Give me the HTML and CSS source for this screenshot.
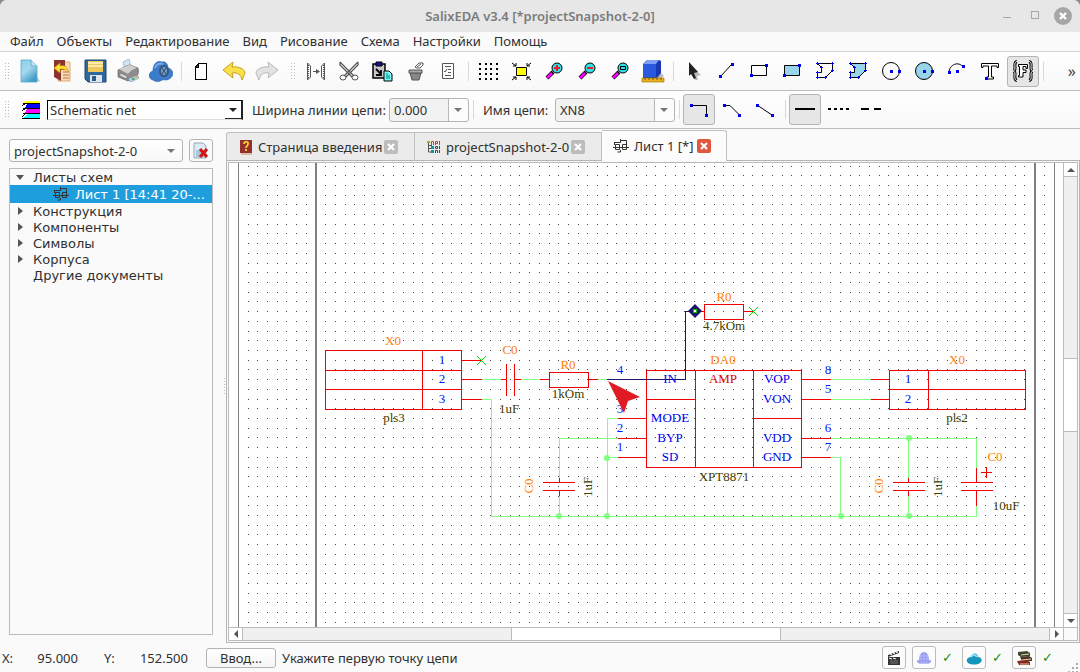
FILE: index.html
```html
<!DOCTYPE html>
<html lang="ru">
<head>
<meta charset="utf-8">
<title>SalixEDA v3.4</title>
<link rel="stylesheet" href="styles.css">
</head>
<body>
<div class="window">
<header class="titlebar">
  <span class="titlebar-side"></span>
  <h1 class="title">SalixEDA v3.4 [*projectSnapshot-2-0]</h1>
  <span class="titlebar-side window-buttons">
    <button class="window-button" aria-label="Свернуть"><svg width="18" height="18"><path d="M5 10h8v1H5z" fill="#a8a8a8"/></svg></button>
    <button class="window-button" aria-label="Развернуть"><svg width="18" height="18" class="crisp"><rect x="5.500" y="4.500" width="7" height="7" fill="none" stroke="#a8a8a8"/></svg></button>
    <button class="window-button" aria-label="Закрыть"><svg width="18" height="18"><circle cx="9" cy="9" r="9" fill="#a6a6a6"/><path d="M6 6l6 6M12 6l-6 6" stroke="#fff" stroke-width="2.400"/></svg></button>
  </span>
</header>

<nav class="menubar">
  <button>Файл</button><button>Объекты</button><button>Редактирование</button><button>Вид</button><button>Рисование</button><button>Схема</button><button>Настройки</button><button>Помощь</button>
</nav>

<div class="toolbar">
  <span class="grip grip-start"></span>
  <button class="tool" aria-label="Новый"><svg class="icon" viewBox="0 0 24 24"><defs><linearGradient id="sky" x2="0.600" y2="1"><stop stop-color="#86d0ea"/><stop offset="0.500" stop-color="#a6d9ec"/><stop offset="1" stop-color="#3f9cc6"/></linearGradient></defs><path d="M18 15l5 7-3 1h-5z" fill="#ccc"/><path d="M4 1h10l6 6v16H4z" fill="url(#sky)" stroke="#55a9cd" stroke-width="0.800"/><path d="M14 1v6h6" fill="#bfe5f2" stroke="#55a9cd" stroke-width="0.800"/></svg></button>
  <button class="tool" aria-label="Открыть"><svg class="icon" viewBox="0 0 24 24"><path d="M8 3h12v19H8z" fill="#f6dcb8" stroke="#e0ac70"/><path d="M13 13h6M13 16h6M13 19h6" stroke="#b8763e"/><path d="M4 1h11v10h-4v11l-7-4z" fill="#8c3330"/><path d="M4 9l6-5v3c5-1 8 1 8 6-2-3-5-3-8-3v4z" fill="#ffe22e" stroke="#c79a10" stroke-width="0.700"/></svg></button>
  <button class="tool" aria-label="Сохранить"><svg class="icon" viewBox="0 0 24 24"><path d="M2 1h21v22H5l-3-3z" fill="#2f679b" stroke="#1d4671"/><path d="M5 2h15v11H5z" fill="#f2c759"/><path d="M5 4h15M5 7h15" stroke="#fbe9ad" stroke-width="2"/><path d="M7 16h12v7H7z" fill="#dde6ee"/><path d="M9 17h4v5H9z" fill="#2b5a8b"/></svg></button>
  <button class="tool" aria-label="Печать"><svg class="icon" viewBox="0 0 24 24"><path d="M7 3l6-3 2 8-6 3z" fill="#d3e4f2" stroke="#8eb0cc" stroke-width="0.800"/><path d="M2 11c3-1 8-5 12-5l8 3c1 4 0 8-2 9l-8 4-10-4z" fill="#8c8c8c" stroke="#666" stroke-width="0.700"/><path d="M3 10c3-1 8-4 11-4l7 3c-4 1-7 3-9 6z" fill="#cfcfcf"/><path d="M4 14l7 3v3l-7-3z" fill="#ddd" stroke="#666" stroke-width="0.600"/><path d="M12 20l9-4 2 3-8 4z" fill="#bcd8ef" stroke="#678" stroke-width="0.500"/><path d="M15 20l3-1 1 1-2 1z" fill="#2c9a3b"/><path d="M18 18l3-1 1 1-2 1z" fill="#e8a228"/></svg></button>
  <button class="tool" aria-label="Облако"><svg class="icon" viewBox="0 0 24 24"><path d="M4 21c-5-1-5-8 0-9 0-7 4-11 9-9 4-1 6 3 6 6 6 1 6 9 1 11-3 2-4 0-7 1-3 2-6 2-9 0z" fill="#3b7dcc" stroke="#2a62ab" stroke-width="0.700"/><path d="M6 9c1-4 5-5 8-4" stroke="#7aacE6" stroke-width="2" fill="none"/><ellipse cx="15" cy="12" rx="4" ry="5" fill="#6f9fd2" stroke="#3a5578" stroke-width="2"/><path d="M13 9l4 6M17 9l-4 6" stroke="#2f4867"/></svg></button>
  <span class="divider"></span>
  <button class="tool" aria-label="Лист"><svg class="icon crisp" viewBox="0 0 24 24"><path d="M6.500 7.500l3-3h8v16h-11z" fill="#fff" stroke="#000"/><path d="M6.500 8.500h3v-4z" fill="#1a8f86" stroke="#000"/></svg></button>
  <button class="tool" aria-label="Отменить"><svg class="icon" viewBox="0 0 24 24"><path d="M1 11l10-8-1 5c8-1 13 3 13 6l-3 7c-1-5-4-8-10-7l1 5z" fill="#fbe04a" stroke="#c4a013" stroke-linejoin="round"/></svg></button>
  <button class="tool" aria-label="Повторить"><svg class="icon" viewBox="0 0 24 24"><path d="M23 11L13 3l1 5C6 7 1 11 1 14l3 7c1-5 4-8 10-7l-1 5z" fill="#e2e2e2" stroke="#b8b8b8" stroke-linejoin="round"/></svg></button>
  <span class="grip grip-middle"></span>
  <button class="tool" aria-label="Разделить"><svg class="icon line-icon" viewBox="0 0 24 24"><path d="M3.500 4v17M3.500 4l3 3v11l-3 3M20.500 4v17M20.500 4l-3 3v11l3 3M9 12.500h5"/><path d="M4.500 6v13M19.500 6v13" stroke-dasharray="1 1"/><path d="M12 10l4 2.500-4 2.500z" fill="#555" stroke="none"/></svg></button>
  <button class="tool" aria-label="Вырезать"><svg class="icon" viewBox="0 0 24 24" fill="none" stroke="#555"><path d="M3 3l14 14M21 3L7 17M3 3v3l12 12M21 3v3L9 18" stroke-width="1.200"/><ellipse cx="6" cy="18.500" rx="3" ry="2.500"/><ellipse cx="18" cy="18.500" rx="3" ry="2.500"/></svg></button>
  <button class="tool" aria-label="Вставить"><svg class="icon" viewBox="0 0 24 24"><path d="M3 5h12v14H3z" fill="#c6c6c6" stroke="#000" stroke-width="1.500"/><path d="M6 3h6v4H6z" fill="#16159b" stroke="#000"/><path d="M6 10l5 5M11 11v5H6" stroke="#000" stroke-width="1.800" fill="none"/><path d="M14 12h5l3 3v7h-8z" fill="#7ff" stroke="#000"/><path d="M16 15h2M16 17h4M16 19h4" stroke="#077"/></svg></button>
  <button class="tool" aria-label="Удалить"><svg class="icon" viewBox="0 0 24 24"><path d="M7 14h11l-2 7H9z" fill="#888" stroke="#555"/><path d="M6 11h13v3H6z" fill="#aaa" stroke="#555"/><path d="M12 8l4-4h4v2l-3 3h-3z" fill="#fff" stroke="#555"/><path d="M14 8l4-3" stroke="#555"/></svg></button>
  <button class="tool" aria-label="Свойства"><svg class="icon line-icon" viewBox="0 0 24 24"><path d="M6.500 4.500h11v15h-11zM9 7.500h6M12 10.500h3M12 13.500h3M9 16.500h6M8 12l1 1 2-3"/></svg></button>
  <span class="divider"></span>
  <button class="tool" aria-label="Сетка"><svg class="icon crisp" viewBox="0 0 24 24"><path d="M4 4v17M10 4v17M15 4v17M21 4v17" stroke="#000" stroke-width="2" stroke-dasharray="2 3"/></svg></button>
  <button class="tool" aria-label="Показать всё"><svg class="icon" viewBox="0 0 24 24"><path d="M7.500 8.500h10v8h-10z" fill="#ff0" stroke="#000"/><path d="M3 4l4 3M7 4v3H4M22 4l-4 3M18 4v3h3M3 21l4-3M7 21v-3H4M22 21l-4-3M18 21v-3h3" stroke="#000" fill="none"/></svg></button>
  <button class="tool" aria-label="Увеличить"><svg class="icon" viewBox="0 0 24 24"><path d="M5 19l6-6" stroke="#000" stroke-width="4"/><path d="M5 19l5-5" stroke="#f0f" stroke-width="2.500"/><circle cx="15" cy="9" r="5" fill="#31e1e6" stroke="#000"/><path d="M12 9h6M15 6v6" stroke="#e3202a" stroke-width="2"/></svg></button>
  <button class="tool" aria-label="Уменьшить"><svg class="icon" viewBox="0 0 24 24"><path d="M5 19l6-6" stroke="#000" stroke-width="4"/><path d="M5 19l5-5" stroke="#f0f" stroke-width="2.500"/><circle cx="15" cy="9" r="5" fill="#31e1e6" stroke="#000"/><path d="M12 9h6" stroke="#e3202a" stroke-width="2"/></svg></button>
  <button class="tool" aria-label="Окно"><svg class="icon" viewBox="0 0 24 24"><path d="M5 19l6-6" stroke="#000" stroke-width="4"/><path d="M5 19l5-5" stroke="#f0f" stroke-width="2.500"/><circle cx="15" cy="9" r="5" fill="#31e1e6" stroke="#000"/><path d="M12.500 7.500h5v3h-5z" fill="none" stroke="#000"/></svg></button>
  <button class="tool" aria-label="3D"><svg class="icon" viewBox="0 0 24 24"><path d="M18 12l5 5-3 2h-4z" fill="#bbb"/><path d="M2 5l4-4h12l2 1v12l-4 5H2z" fill="#1a38b4"/><path d="M2 5l4-4h12l-3 4z" fill="#7c9ff5"/><path d="M2 5h13v13H2z" fill="#2a58de"/><path d="M1 19h22v4H1z" fill="#e6b020" stroke="#a97c10" stroke-width="0.700"/><path d="M4 19v2M8 19v2M12 19v2M16 19v2M20 19v2" stroke="#7b5a08"/></svg></button>
  <span class="divider"></span>
  <button class="tool" aria-label="Выбор"><svg class="icon" viewBox="0 0 24 24"><path d="M11 8l9 8-4 1 1 4h-3z" fill="#bbb"/><path d="M8 3l9 10-4 1 2 5-2 1-3-5-2 2z" fill="#222"/></svg></button>
  <button class="tool" aria-label="Линия"><svg class="icon" viewBox="0 0 24 24"><path d="M6 18L18 5" stroke="#000"/><path class="node" d="M5 16h3v3H5zM17 4h3v3h-3z"/></svg></button>
  <button class="tool" aria-label="Прямоугольник"><svg class="icon" viewBox="0 0 24 24"><path d="M4.500 6.500h15v10h-15z" fill="none" stroke="#000"/><path class="node" d="M3 15h3v3H3zM18 5h3v3h-3z"/></svg></button>
  <button class="tool" aria-label="Залитый прямоугольник"><svg class="icon" viewBox="0 0 24 24"><path d="M4.500 6.500h15v10h-15z" fill="#99d5ea" stroke="#000"/><path class="node" d="M3 15h3v3H3zM18 5h3v3h-3z"/></svg></button>
  <button class="tool" aria-label="Полигон"><svg class="icon" viewBox="0 0 24 24"><path d="M4.500 4.500h15v7l-7 7h-8v-5h4v-5z" fill="none" stroke="#000"/><path class="pin" d="M3 4.500h3M4.500 3v3M18 4.500h3M19.500 3v3M18 11.500h3M19.500 10v3M11 18.500h3M12.500 17v3M3 18.500h3M4.500 17v3M3 13.500h3M4.500 12v3M7 8.500h3M8.500 7v3"/></svg></button>
  <button class="tool" aria-label="Залитый полигон"><svg class="icon" viewBox="0 0 24 24"><path d="M4.500 4.500h15v7l-7 7h-8v-5h4v-5z" fill="#99d5ea" stroke="#000"/><path class="pin" d="M3 4.500h3M4.500 3v3M18 4.500h3M19.500 3v3M18 11.500h3M19.500 10v3M11 18.500h3M12.500 17v3M3 18.500h3M4.500 17v3M3 13.500h3M4.500 12v3M7 8.500h3M8.500 7v3"/></svg></button>
  <button class="tool" aria-label="Окружность"><svg class="icon" viewBox="0 0 24 24"><circle cx="12" cy="12" r="8.500" fill="none" stroke="#000"/><path class="node" d="M11 11h3v3h-3zM19 11h3v3h-3z"/></svg></button>
  <button class="tool" aria-label="Круг"><svg class="icon" viewBox="0 0 24 24"><circle cx="12" cy="12" r="8.500" fill="#99d5ea" stroke="#000"/><path class="node" d="M11 11h3v3h-3zM19 11h3v3h-3z"/></svg></button>
  <button class="tool" aria-label="Дуга"><svg class="icon" viewBox="0 0 24 24"><path d="M4 14c0-9 10-12 14-6" fill="none" stroke="#000"/><path class="node" d="M3 12h3v3H3zM11 11h3v3h-3zM17 6h3v3h-3z"/></svg></button>
  <button class="tool" aria-label="Текст"><svg class="icon" viewBox="0 0 24 24"><path d="M3.500 4.500h17v4h-1.500v-1.500h-5.500v11h2v2h-7v-2h2v-11H5v1.500H3.500z" fill="#fff" stroke="#000"/><path class="node" d="M7 18h3v3H7z"/></svg></button>
  <button class="tool pressed" aria-label="Параметр" aria-pressed="true"><svg class="icon" viewBox="0 0 24 24" fill="none"><g id="braced"><path d="M6 2.500C3 3 4 6 4 9c0 2-1 3-2 3 1 0 2 1 2 3 0 3-1 6 2 6.500M18 2.500c3 .5 2 3.500 2 6.500 0 2 1 3 2 3-1 0-2 1-2 3 0 3 1 6-2 6.500" stroke="#000" stroke-width="3"/><path d="M6 2.500C3 3 4 6 4 9c0 2-1 3-2 3 1 0 2 1 2 3 0 3-1 6 2 6.500M18 2.500c3 .5 2 3.500 2 6.500 0 2 1 3 2 3-1 0-2 1-2 3 0 3 1 6-2 6.500" stroke="#fff"/></g><path d="M7.500 5.500h9v4h-1.500v-2h-3v3.500h3v2.500h-3v4.500h-4.500v-1.500h1v-9h-1z" fill="#fff" stroke="#000"/></svg></button>
  <span class="divider"></span>
  <button class="more" aria-label="Ещё">»</button>
</div>

<div class="toolbar toolbar-net">
  <span class="grip grip-start"></span>
  <button class="layers" aria-label="Слои"><svg width="18" height="18" class="crisp"><path d="M4 0h14v2H1z" fill="#ff0"/><path d="M5 3h13v4H3z" fill="#00f"/><path d="M5 8h13v4H3z" fill="#f0f"/><path d="M5 13h13v4H1z" fill="#0ff"/><path d="M1 2.500h17M1 7.500h17M1 12.500h17M0 5l4-3M0 10l4-3M0 16l4-4M0 17.500h18" stroke="#000"/></svg></button>
  <span class="combo combo-layer"><select aria-label="Слой"><option>Schematic net</option></select><i class="arrow"></i></span>
  <label class="net-label" for="width">Ширина линии цепи:</label>
  <span class="combo combo-split combo-width"><select id="width"><option>0.000</option></select><i class="arrow"></i></span>
  <span class="divider"></span>
  <label class="name-label" for="name">Имя цепи:</label>
  <span class="combo combo-split combo-name"><select id="name"><option>XN8</option></select><i class="arrow"></i></span>
  <span class="divider"></span>
  <button class="tool pressed" aria-label="Под прямым углом" aria-pressed="true"><svg class="icon" viewBox="0 0 24 24"><path d="M4 7.500h15.500V17" fill="none" stroke="#000"/><path class="node" d="M3 6h3v3H3zM18 16h3v3h-3z"/></svg></button>
  <button class="tool" aria-label="Под углом 45"><svg class="icon" viewBox="0 0 24 24"><path d="M4 7.500h6l9 9" fill="none" stroke="#000"/><path class="node" d="M3 6h3v3H3zM18 16h3v3h-3z"/></svg></button>
  <button class="tool" aria-label="Произвольно"><svg class="icon" viewBox="0 0 24 24"><path d="M4 7l15 10" stroke="#000"/><path class="node" d="M3 6h3v3H3zM18 16h3v3h-3z"/></svg></button>
  <span class="divider"></span>
  <button class="tool pressed" aria-label="Сплошная" aria-pressed="true"><svg class="icon" viewBox="0 0 24 24"><path d="M2 11h20" stroke="#000" stroke-width="2"/></svg></button>
  <button class="tool" aria-label="Точечная"><svg class="icon" viewBox="0 0 24 24"><path d="M2 11h21" stroke="#000" stroke-width="2" stroke-dasharray="3 3"/></svg></button>
  <button class="tool" aria-label="Пунктир"><svg class="icon" viewBox="0 0 24 24"><path d="M2 11h20" stroke="#000" stroke-width="2" stroke-dasharray="8 5"/></svg></button>
</div>

<main class="workspace">
  <aside class="sidebar">
    <div class="project-row">
      <span class="combo combo-project"><select aria-label="Проект"><option>projectSnapshot-2-0</option></select><i class="arrow"></i></span>
      <button class="close-project" aria-label="Закрыть проект"><svg width="18" height="18"><path d="M2 1h9l3 3v12H2z" fill="#dceaf3" stroke="#93a9ba"/><path d="M4 8h9v7H4z" fill="#a9c8dc"/><path d="M8 7l7 8M15 7l-7 8" stroke="#d31515" stroke-width="3"/></svg></button>
    </div>
    <ul class="tree">
      <li><i class="expander open"></i>Листы схем</li>
      <li class="selected"><svg class="sheet-icon" width="16" height="14"><use href="#sheet"/></svg>Лист 1 [14:41 20-...</li>
      <li><i class="expander"></i>Конструкция</li>
      <li><i class="expander"></i>Компоненты</li>
      <li><i class="expander"></i>Символы</li>
      <li><i class="expander"></i>Корпуса</li>
      <li><i class="expander none"></i>Другие документы</li>
    </ul>
  </aside>
  <div class="splitter"></div>
  <section class="editor">
    <div class="tabs">
      <div class="tab tab-intro"><svg width="14" height="16"><path d="M1 1h12v13H1z" fill="#93312f"/><path d="M2 14h11v2H2z" fill="#d8c0a4"/><path d="M5 5c0-3 5-3 4 0 0 2-2 2-2 4M7 10v2" fill="none" stroke="#ffdf2b" stroke-width="1.600"/></svg><button class="tab-name">Страница введения</button><button class="tab-close" aria-label="Закрыть вкладку"><svg width="14" height="14"><path d="M4 4l6 6M10 4l-6 6" stroke="#fff" stroke-width="2.200"/></svg></button></div>
      <div class="tab tab-project"><svg width="14" height="14" fill="none"><path d="M1.500 1v11h3M2 5.500h3M2 8.500h3" stroke="#555"/><path d="M0 1h3v2H0z" fill="#bba800"/><path d="M4.500 5V1.500h2V5M8.500 5V1.500h2v2h-2M12.500 1v4" stroke="#b34646"/><path d="M4 6h3v3H4zM4 10h3v3H4z" fill="#199"/><path d="M8.500 6.500h2v2h-2zM12.500 6v3M8.500 13v-2.500h2V13M12.500 10v3" stroke="#444"/></svg><button class="tab-name">projectSnapshot-2-0</button><button class="tab-close" aria-label="Закрыть вкладку"><svg width="14" height="14"><path d="M4 4l6 6M10 4l-6 6" stroke="#fff" stroke-width="2.200"/></svg></button></div>
      <div class="tab tab-sheet active"><svg width="16" height="14" fill="none"><g id="sheet" fill="none" stroke="#333"><path d="M1.500 3.500h6v-2h6v2M0 8.500h16M1.500 3v3M13.500 3v3M7.500 11v2h-3M7.500 0v3"/><path d="M2.500 5.500h4v5h-4zM9.500 5.500h4v5h-4z"/></g></svg><button class="tab-name">Лист 1 [*]</button><button class="tab-close" aria-label="Закрыть вкладку"><svg width="14" height="14"><path d="M4 4l6 6M10 4l-6 6" stroke="#fff" stroke-width="2.200"/></svg></button></div>
    </div>
    <div class="pane">
      <div class="viewport">
        <svg class="sheet" role="img" aria-label="Схема усилителя">
          <g transform="translate(-229 -163)">
            <path id="grid" class="crisp" fill="#484848"></path>
            <g class="crisp" fill="#808080"><rect x="238" y="163" width="1" height="100%"/><rect x="315" y="163" width="2" height="100%"/><rect x="1034" y="163" width="2" height="100%"/><rect x="1054" y="163" width="1" height="100%"/></g>
            <g class="crisp" fill="none" stroke-linecap="square" transform="translate(0.500 0.500)">
              <path class="wire" d="M481 379H501M520 379H540M597 379H607M481 399H491V516H976V506M559 478V438H618M559 496V516M618 418H607V516M607 457H618M831 379H871M831 399H871M831 438H976V468M908 438V478M908 496V516M831 457H840V516"/>
              <path class="part" d="M325 350H461V409H325ZM422 350V409M325 370H461M325 389H461M461 360H481M461 379H481M461 399H481"/>
              <path class="part" d="M501 379H506M506 364V395M514 364V395M514 379H520M540 379H549M549 372H588V387H549ZM588 379H597"/>
              <path class="part" d="M698 311H704M704 304H743V319H704ZM743 311H753"/>
              <path class="part" d="M559 478V482M543 482H574M543 490H574M559 490V495M908 478V482M893 482H924M893 490H924M908 490V495M976 468V482M961 482H992M961 490H992M976 490V505M981 472H991M986 467V477"/>
              <path class="part" d="M646 370H801V467H646ZM695 370V467M753 370V467M646 399H695M753 418H801M618 418H646M618 438H646M618 457H646M801 379H830M801 399H830M801 438H830M801 457H830"/>
              <path class="part" d="M889 370H1025V409H889ZM928 370V409M889 389H1025M871 379H889M871 399H889"/>
              <path class="active-wire" d="M607 379H685V311H690"/>
            </g>
            <g fill="#80ff80"><circle cx="559" cy="516" r="3"/><circle cx="607" cy="458" r="3"/><circle cx="607" cy="516" r="3"/><circle cx="841" cy="516" r="3"/><circle cx="909" cy="438" r="3"/><circle cx="909" cy="516" r="3"/></g>
            <path class="open-end" d="M477 356l9 9M486 356l-9 9M749 307l9 9M758 307l-9 9"/>
            <path d="M695 304l7 7-7 7-7-7z" fill="#1d1664"/><path d="M693 309h4v4h-4z" fill="#0c0"/><path d="M694 310h2v2h-2z" fill="#fff"/>
            <g class="refs"><text x="393" y="345">X0</text><text x="510" y="354">C0</text><text x="568" y="369">R0</text><text x="724" y="301">R0</text><text x="723" y="364">DA0</text><text x="957" y="364">X0</text><text x="995" y="461">C0</text><text transform="translate(533 486) rotate(-90)">C0</text><text transform="translate(883 486) rotate(-90)">C0</text></g>
            <g class="values"><text x="394" y="422">pls3</text><text x="509" y="413">1uF</text><text x="568" y="398">1kOm</text><text x="724" y="330">4.7kOm</text><text x="724" y="481">XPT8871</text><text x="957" y="422">pls2</text><text x="1006" y="510">10uF</text><text transform="translate(592 487) rotate(-90)">1uF</text><text transform="translate(942 487) rotate(-90)">1uF</text></g>
            <g class="numbers"><text x="442" y="364">1</text><text x="442" y="383">2</text><text x="442" y="403">3</text><text x="620" y="374">4</text><text x="620" y="413">3</text><text x="620" y="432">2</text><text x="620" y="451">1</text><text x="828" y="374">8</text><text x="828" y="393">5</text><text x="828" y="432">6</text><text x="828" y="451">7</text><text x="908" y="383">1</text><text x="908" y="403">2</text></g>
            <g class="pins"><text x="670" y="383">IN</text><text x="670" y="422">MODE</text><text x="670" y="442">BYP</text><text x="670" y="461">SD</text><text x="777" y="383">VOP</text><text x="777" y="403">VON</text><text x="777" y="442">VDD</text><text x="777" y="461">GND</text></g>
            <text class="kind" x="723" y="383">AMP</text>
            <path d="M608 381l32 16-12 4-4 12z" fill="#e01b24"/>
          </g>
        </svg>
      </div>
      <div class="scroll scroll-v"><button class="scroll-step" aria-label="Вверх"><i class="tri up"></i></button><div class="track"><div class="thumb"></div></div><button class="scroll-step" aria-label="Вниз"><i class="tri down"></i></button></div>
      <div class="scroll scroll-h"><button class="scroll-step" aria-label="Влево"><i class="tri left"></i></button><div class="track"><div class="thumb"></div></div><button class="scroll-step" aria-label="Вправо"><i class="tri right"></i></button></div>
      <div class="corner"></div>
    </div>
  </section>
</main>

<footer class="statusbar">
  <span class="axis">X:</span><output class="coord">95.000</output><span class="axis">Y:</span><output class="coord">152.500</output>
  <button class="entry">Ввод...</button><span class="hint">Укажите первую точку цепи</span>
  <span class="status-tools">
    <button class="status-button" aria-label="Видео"><svg width="16" height="16"><path d="M2 7h12v8H2z" fill="#333"/><path d="M2 5l11-4v2L2 7z" fill="#333"/><path d="M4 4l2 1M7 3l2 1M10 2l2 1M3 8l3 1M7 8l3 1" stroke="#fff"/><path d="M4 11h8M4 13h8" stroke="#777"/></svg></button>
    <button class="status-button" aria-label="Помощник"><svg width="16" height="16"><path d="M3 11c0-12 10-12 10 0z" fill="#8f93ee"/><path d="M1 11h14l-2 2H3z" fill="#c4c6ff" stroke="#8286e8"/><path d="M5 3v8M8 2v9M11 3v8M3 6h10M3 9h10" stroke="#c7c9ff" stroke-width="0.700"/></svg></button><span class="check">✓</span>
    <button class="status-button" aria-label="Сервер"><svg width="16" height="16"><path d="M2 13c-3-3 0-6 3-6 1-4 6-5 7 0 4 0 5 4 2 6-3 2-9 2-12 0z" fill="#1596bd"/><path d="M5 7c2-3 4-3 6 0" stroke="#8de0f1" stroke-width="2" fill="none"/></svg></button><span class="check">✓</span>
    <button class="status-button" aria-label="Библиотека"><svg width="16" height="16"><path d="M2 2l9-1 3 2v3l-9 1-3-2z" fill="#3c442f"/><path d="M4 7l9-1 3 2v3H6z" fill="#4a3325"/><path d="M1 11l9-1 4 2v3H3z" fill="#8c2323"/><path d="M5 5l8-1M6 10l9-1M4 14h9" stroke="#e6d3a8"/></svg></button><span class="check">✓</span>
  </span>
  <span class="size-grip"></span>
</footer>
</div>
<script src="grid.js"></script>
</body>
</html>
```

FILE: grid.js
```js
// Draws the snap grid: one-pixel dots on a pitch of 1.25 mm at the current zoom.
const pitch = 9.71;
let dots = "";
for (let row = 0; row < 48; row++) {
  for (let col = 0; col < 83; col++) {
    const x = Math.floor(248 + col * pitch);
    const y = Math.floor(166 + row * pitch);
    dots += `M${x} ${y}h1v1h-1z`;
  }
}
document.getElementById("grid").setAttribute("d", dots);
```

FILE: styles.css
```css
* { box-sizing: border-box; }
html, body { height: 100%; margin: 0; }
body { font: 13px "Noto Sans", sans-serif; color: #303030; background: #8c8c8c; overflow: hidden; }
button, select { font: inherit; color: inherit; margin: 0; padding: 0; border: 0; background: none; }
svg { display: block; flex: none; }
ul { list-style: none; margin: 0; padding: 0; }
.crisp { shape-rendering: crispEdges; }
.window { display: flex; flex-direction: column; height: 100vh; background: #fafafa; border-radius: 7px 7px 0 0; }

.titlebar { display: flex; align-items: center; height: 32px; flex: none; background: #e7e7e7; border-radius: 7px 7px 0 0; }
.titlebar-side { flex: 1; padding: 0 8px; }
.title { margin: 0; font-size: 13px; font-weight: 600; color: #7b7b7b; }
.window-buttons { display: flex; justify-content: flex-end; gap: 10px; }

.menubar { display: flex; gap: 13px; height: 20px; flex: none; padding: 0 0 2px 10px; border-bottom: 1px solid #d6d6d6; }

.toolbar { display: flex; align-items: center; gap: 1px; height: 39px; flex: none; padding-left: 4px; border-bottom: 1px solid #bdbdbd; background: linear-gradient(#fff, #f8f8f8); white-space: nowrap; }
.toolbar-net { height: 38px; }
.grip { height: 17px; flex: none; background: linear-gradient(90deg, #bbb 1px, transparent 1px 3px, #bbb 3px 4px, transparent 4px) 1px 0 / 5px 100% no-repeat; mask: linear-gradient(#000 1px, transparent 1px) 0 0 / 100% 3px; }
.grip-start { width: 8px; }
.grip-middle { width: 15px; background-position: 7px 0; }
.tool { display: grid; place-items: center; width: 32px; height: 31px; flex: none; border: 1px solid transparent; border-radius: 3px; }
.tool.pressed { background: #e6e6e6; border-color: #b4b4b4; }
.icon { width: 24px; height: 24px; }
.line-icon { fill: none; stroke: #555; }
.node { fill: #0000f0; }
.pin { stroke: #00f; fill: none; }
.divider { width: 6px; height: 19px; flex: none; background: linear-gradient(#d8d8d8, #d8d8d8) 3px 0 / 1px 100% no-repeat; }
.more { margin-left: auto; padding-right: 4px; font-size: 16px; color: #444; }

.combo { display: inline-grid; align-items: center; border: 1px solid #b4b4b4; border-radius: 3px; background: linear-gradient(#fff, #f8f8f8); flex: none; }
.combo > * { grid-area: 1 / 1; }
.combo select { appearance: none; width: 100%; height: 100%; padding-left: 4px; outline: 0; }
.arrow { justify-self: end; border: 4px solid transparent; border-top: 4px solid #777; border-bottom: 0; margin-right: 7px; pointer-events: none; }
.layers { width: 32px; display: grid; place-items: center; padding-left: 3px; }
.combo-layer { width: 196px; height: 20px; border: 1px solid #000; border-right: 2px solid #222; border-bottom-color: #ddd; border-radius: 0; background: linear-gradient(#222, #222) right bottom / 16px 1px no-repeat #fff; margin-left: 1px; }
.combo-layer select { padding-left: 2px; }
.combo-layer .arrow { border-top-color: #222; margin-right: 4px; }
.net-label { width: 144px; padding-left: 8px; flex: none; }
.name-label { width: 77px; padding-left: 6px; flex: none; }
.combo-split { height: 24px; background: linear-gradient(90deg, #f2f2f2 calc(100% - 20px), #b8b8b8 calc(100% - 20px) calc(100% - 19px), #fcfcfc calc(100% - 19px)); }
.combo-width { width: 80px; }
.combo-name { width: 120px; }
.combo-split .arrow { margin-right: 6px; }

.workspace { display: flex; flex: 1; min-height: 0; }
.sidebar { display: flex; flex-direction: column; gap: 6px; width: 213px; flex: none; padding: 10px 0 8px 9px; }
.project-row { display: flex; gap: 6px; height: 23px; }
.combo-project { flex: 1; }
.close-project { display: grid; place-items: center; width: 24px; border: 1px solid #b4b4b4; border-radius: 3px; }
.tree { flex: 1; border: 1px solid #bbb; font: 13px "DejaVu Sans", sans-serif; overflow: hidden; white-space: nowrap; }
.tree li { display: flex; align-items: center; height: 16px; }
.tree .selected { height: 18px; background: #1f9ede; color: #fff; padding-left: 43px; }
.sheet-icon { margin-right: 6px; }
.expander { flex: none; margin: 0 10px 0 8px; border: 4px solid transparent; border-left: 5px solid #555; border-right: 0; }
.expander.open { margin: 0 9px 0 6px; border: 4px solid transparent; border-top: 5px solid #555; border-bottom: 0; }
.tree .none { border-color: transparent; }
.splitter { width: 13px; flex: none; background: repeating-linear-gradient(#bbb 0 1px, transparent 1px 3px) 11px 50% / 1px 16px no-repeat; }

.editor { display: flex; flex-direction: column; flex: 1; min-width: 0; }
.tabs { display: flex; align-items: flex-end; height: 31px; flex: none; }
.tab { display: flex; align-items: center; height: 28px; border: 1px solid #c0c0c0; border-bottom: 0; background: #ebebeb; border-radius: 3px 0 0 0; white-space: nowrap; }
.tab + .tab { border-left: 0; border-radius: 0; }
.tab .tab-name { flex: 1; text-align: left; padding-left: 5px; }
.tab-intro { width: 189px; padding: 0 16px 0 12px; }
.tab-project { width: 187px; padding: 0 16px 0 12px; }
.tab.active { width: 125px; height: 31px; margin-bottom: -1px; padding: 0 15px 0 11px; border-radius: 0 3px 0 0; background: #fcfcfc; position: relative; }
.tab-close { border-radius: 2px; background: #bcbcbc; }
.active .tab-close { background: #e0583c; }
.pane { display: grid; grid-template: minmax(0, 1fr) 14px / minmax(0, 1fr) 15px; flex: 1; min-height: 0; padding: 1px; border: 1px solid #b5b5b5; }
.viewport { min-width: 0; border: 1px solid #bbb; border-right: 0; border-bottom: 0; background: #fff; overflow: hidden; }
.sheet { width: 100%; height: 100%; }
.wire { stroke: #80ff80; }
.part { stroke: #f00000; }
.active-wire { stroke: #1d1664; }
.open-end { stroke: #00e000; fill: none; }
.sheet text { font: 13px "Liberation Serif", serif; text-anchor: middle; }
.refs { fill: #ff8000; }
.values { fill: #404000; }
.numbers { fill: #0020ff; }
.pins { fill: #0000f0; }
.kind { fill: #e00000; }

.scroll { display: flex; border: 1px solid #bbb; background: #f0f0f0; }
.scroll-v { flex-direction: column; border-bottom: 0; }
.scroll-h { border-right: 0; }
.scroll-step { display: grid; place-items: center; flex: none; width: 13px; height: 13px; background: #fff; }
.scroll-h .scroll-step { height: 12px; }
.track { display: flex; flex: 1; }
.scroll-h .track { border: solid #bbb; border-width: 0 1px; }
.scroll-v .track { flex-direction: column; border: solid #bbb; border-width: 1px 0; }
.thumb { background: #fff; border: 0 solid #bbb; }
.scroll-h .thumb { width: 33.400%; margin-left: 33.300%; border-width: 0 1px; }
.scroll-v .thumb { height: 17%; border-width: 1px 0; }
.scroll-v .track::before { content: ""; height: 41.500%; }
.corner { border: 1px solid #bbb; background: #fafafa; }
.tri { border: 4px solid transparent; }
.up { border-top: 0; border-bottom-color: #555; }
.down { border-bottom: 0; border-top-color: #555; }
.left { border-left: 0; border-right-color: #555; }
.right { border-right: 0; border-left-color: #555; }

.statusbar { display: flex; align-items: center; height: 29px; flex: none; padding-left: 2px; }
.axis { width: 12px; }
.coord { width: 64px; text-align: right; margin-right: 26px; }
.axis ~ .axis { width: 14px; }
.coord ~ .coord { width: 70px; margin-right: 18px; }
.entry { width: 70px; height: 20px; border: 1px solid #b4b4b4; border-radius: 3px; background: linear-gradient(#fff, #f6f6f6); line-height: 16px; }
.hint { padding-left: 6px; flex: 1; }
.status-tools { display: flex; align-items: center; gap: 6px; }
.status-button { display: grid; place-items: center; width: 24px; height: 23px; border: 1px solid #bbb; border-radius: 3px; background: #fcfcfc; }
.check { width: 10px; margin-right: 4px; text-align: center; color: #129012; font: 13px "DejaVu Sans", sans-serif; }
.size-grip { width: 24px; height: 14px; align-self: end; background: linear-gradient(#bbb, #bbb) 0 0 / 1px 1px; background: radial-gradient(circle at 1px 1px, #aaa 1px, transparent 1px) right / 4px 4px; clip-path: polygon(100% 0, 100% 100%, 50% 100%); }
```
